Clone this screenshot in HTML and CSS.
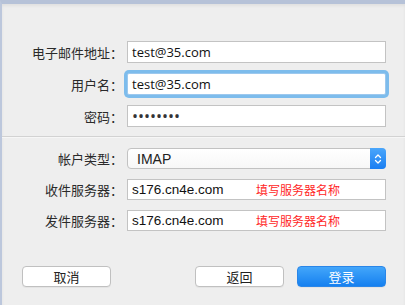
FILE: index.html
```html
<!DOCTYPE html>
<html>
<head>
<meta charset="utf-8">
<link rel="stylesheet" href="styles.css">
</head>
<body>
<div class="window">
  <div class="form top">
    <label class="lbl">电子邮件地址：</label>
    <div class="field"><span class="val">test@35.com</span></div>
    <label class="lbl">用户名：</label>
    <div class="field focus"><span class="val">test@35.com</span></div>
    <label class="lbl">密码：</label>
    <div class="field"><span class="val dots">••••••••</span></div>
  </div>
  <div class="sep"></div>
  <div class="form bottom">
    <label class="lbl">帐户类型：</label>
    <div class="select"><span class="sel-val">IMAP</span>
      <span class="stepper"><svg width="8" height="12" viewBox="0 0 8 12"><path d="M1.5 4.5 L4 2 L6.5 4.5 M1.5 7.5 L4 10 L6.5 7.5" fill="none" stroke="#fff" stroke-width="1.3" stroke-linecap="round" stroke-linejoin="round"/></svg></span>
    </div>
    <label class="lbl">收件服务器：</label>
    <div class="field"><span class="val srv">s176.cn4e.com</span><span class="hint">填写服务器名称</span></div>
    <label class="lbl">发件服务器：</label>
    <div class="field"><span class="val srv">s176.cn4e.com</span><span class="hint">填写服务器名称</span></div>
  </div>
  <div class="buttons">
    <button class="btn">取消</button>
    <div class="spacer"></div>
    <button class="btn">返回</button>
    <button class="btn primary">登录</button>
  </div>
</div>
</body>
</html>
```
FILE: styles.css
```css
html, body {
  margin: 0;
  padding: 0;
  width: 405px;
  height: 305px;
  overflow: hidden;
  background: #eeeeee;
}
.window {
  box-sizing: border-box;
  width: 405px;
  height: 305px;
  border-top: 4px solid #b6c2d8;
  border-left: 2px solid #bcc7dc;
  background: #eeeeee;
  box-shadow: inset 0 2px 3px rgba(0,0,0,0.06);
  display: flex;
  flex-direction: column;
  font-family: "Noto Sans CJK SC", "Open Sans", sans-serif;
  font-size: 13px;
  color: #222;
}
.form {
  display: grid;
  grid-template-columns: 121px 259px;
  column-gap: 4px;
  align-items: center;
}
.top {
  padding-top: 37px;
  padding-bottom: 9px;
  grid-auto-rows: 22px;
  row-gap: 10px;
}
.bottom {
  padding-top: 10px;
  grid-auto-rows: 21px;
  row-gap: 10px;
}
.lbl {
  text-align: right;
  white-space: nowrap;
  line-height: 21px;
  color: #2a2a2a;
}
.field {
  box-sizing: border-box;
  height: 100%;
  background: #fff;
  border: 1px solid #c3c3c3;
  display: flex;
  align-items: center;
  padding-left: 4px;
}
.field.focus {
  border-color: #9cc8ee;
  box-shadow: 0 0 0 3px #7dbcec;
  border-radius: 2px;
}
.val {
  font-family: "Open Sans", "Noto Sans", sans-serif;
  font-size: 13px;
  color: #111;
}
.val.dots {
  font-size: 16px;
  line-height: 16px;
  color: #333;
}
.val.srv {
  font-family: "Liberation Sans", "Noto Sans", sans-serif;
  font-size: 13.5px;
  width: 124px;
}
.hint {
  font-size: 12px;
  color: #ff2626;
}
.sep {
  height: 1px;
  background: #d2d2d2;
  border-bottom: 1px solid #f6f6f6;
}
.select {
  box-sizing: border-box;
  height: 100%;
  background: linear-gradient(#ffffff, #f7f7f7);
  border: 1px solid #c2c2c2;
  border-radius: 4px;
  display: flex;
  align-items: center;
  padding-left: 9px;
  position: relative;
}
.sel-val {
  flex: 1;
  font-family: "Liberation Sans", "Noto Sans", sans-serif;
  font-size: 14px;
  color: #222;
}
.stepper {
  align-self: stretch;
  width: 16px;
  margin: -1px -1px -1px 0;
  background: linear-gradient(#4aa6fb, #1a7ef2);
  border-radius: 0 4px 4px 0;
  display: flex;
  align-items: center;
  justify-content: center;
}
.buttons {
  margin-top: auto;
  padding: 0 19px 18px 20px;
  display: flex;
  align-items: center;
  gap: 13px;
}
.spacer {
  flex: 1;
}
.btn {
  box-sizing: border-box;
  width: 89px;
  height: 21px;
  background: #fff;
  border: 1px solid #c0c0c0;
  border-radius: 4px;
  font-family: "Noto Sans CJK SC", sans-serif;
  font-size: 13px;
  color: #222;
  padding: 0;
  line-height: 19px;
  box-shadow: 0 1px 0 rgba(0,0,0,0.04);
}
.btn.primary {
  background: linear-gradient(#43a6fa, #1580f0);
  border-color: #2a86e8;
  color: #fff;
}
```
